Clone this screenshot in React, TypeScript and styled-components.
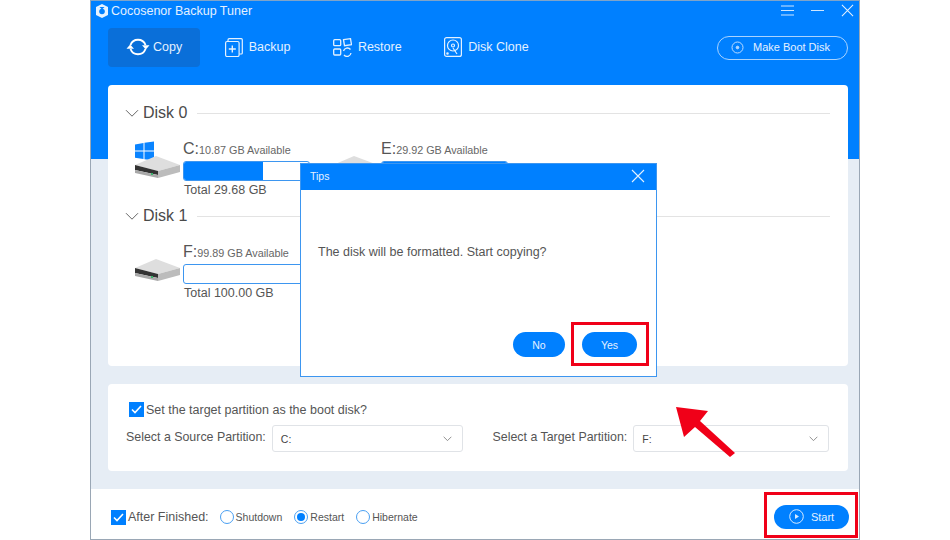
import styled, { createGlobalStyle } from "styled-components";

const BLUE = "#0080ff";
const RED = "#f00018";

const GlobalStyle = createGlobalStyle`
  html, body {
    margin: 0;
    padding: 0;
    background: #ffffff;
    font-family: "Liberation Sans", Arial, sans-serif;
  }
  * { box-sizing: border-box; }
`;

const Page = styled.div`
  position: relative;
  width: 950px;
  height: 540px;
  overflow: hidden;
  padding-left: 90px;
`;

const Window = styled.div`
  position: relative;
  width: 770px;
  height: 540px;
  display: flex;
  flex-direction: column;
  border: 1px solid #9aa7b5;
  border-top-color: #7fa4c9;
  background: linear-gradient(${BLUE} 158px, #e6edf5 158px);
`;

const TitleBar = styled.div`
  height: 19px;
  display: flex;
  align-items: center;
  padding: 0 5px;
  color: #e4f1ff;
  font-size: 12.5px;
`;

const TitleText = styled.span`
  margin-left: 3px;
`;

const WindowControls = styled.div`
  margin-left: auto;
  display: flex;
  align-items: center;
  gap: 17px;
`;

const TabBar = styled.div`
  height: 39px;
  margin-top: 8px;
  padding: 0 11px 0 17px;
  display: flex;
  align-items: center;
  gap: 6.5px;
`;

const Tab = styled.div<{ $active?: boolean }>`
  height: 39px;
  padding: 0 18px 1px;
  display: flex;
  align-items: center;
  gap: ${(p) => (p.$active ? "3px" : "6px")};
  border-radius: 4px;
  font-size: 12.5px;
  color: #e4f1ff;
  background: ${(p) => (p.$active ? "#0a6fd9" : "transparent")};
`;

const BootButton = styled.div`
  margin-left: auto;
  width: 131px;
  height: 24px;
  padding: 0 4px 1px 0;
  display: flex;
  align-items: center;
  justify-content: center;
  gap: 9px;
  border: 1px solid #a9d3ff;
  border-radius: 12px;
  font-size: 11px;
  color: #e4f1ff;
`;

const DiskCard = styled.div`
  height: 281px;
  margin: 18px 11px 0 17px;
  padding: 18px 18px 0 17px;
  background: #ffffff;
  border-radius: 4px;
`;

const DiskHeading = styled.div<{ $second?: boolean }>`
  height: 20px;
  margin-top: ${(p) => (p.$second ? "7px" : "0")};
  display: flex;
  align-items: center;
  gap: 4px;
  font-size: 16px;
  color: #4a4a4a;

  &::after {
    content: "";
    flex: 1;
    height: 1px;
    margin-left: 6px;
    background: #e3e3e3;
  }
`;

const DriveRow = styled.div`
  margin-top: 15px;
  padding-left: 9px;
  display: flex;
  gap: 22px;
`;

const Drive = styled.div`
  display: flex;
  gap: 3px;
`;

const DriveArt = styled.svg`
  flex: none;
  width: 46px;
  height: 40px;
  margin-top: 2px;
`;

const DriveInfo = styled.div`
  width: 127px;
`;

const DriveLabel = styled.div`
  height: 22px;
  display: flex;
  align-items: baseline;
  padding-top: 2px;
  font-size: 16px;
  color: #555555;
`;

const DriveFree = styled.span`
  font-size: 10.8px;
  color: #666666;
`;

const UsageBar = styled.div`
  height: 20px;
  margin-top: 1px;
  border: 1px solid #3d96f0;
  border-radius: 3px;
  overflow: hidden;
  background: #ffffff;
`;

const UsageFill = styled.div`
  height: 100%;
  background: ${BLUE};
`;

const DriveTotal = styled.div`
  height: 18px;
  padding: 1px 0 0 1px;
  line-height: 17px;
  font-size: 12.5px;
  color: #555555;
`;

const OptionsCard = styled.div`
  height: 87px;
  margin: 18px 11px 0 17px;
  padding: 17px 19px 0 18px;
  background: #ffffff;
  border-radius: 4px;
`;

const BootRow = styled.div`
  height: 17px;
  padding-left: 3px;
  display: flex;
  align-items: center;
  gap: 2px;
  font-size: 12.5px;
  color: #555555;
`;

const CheckBox = styled.span`
  flex: none;
  width: 15px;
  height: 15px;
  display: flex;
  align-items: center;
  justify-content: center;
  background: ${BLUE};
`;

const PartitionRow = styled.div`
  margin-top: 7px;
  display: flex;
  align-items: center;
  font-size: 12.4px;
  color: #555555;
`;

const PartitionLabel = styled.span<{ $gap?: number }>`
  margin-left: ${(p) => p.$gap ?? 0}px;
  margin-right: 6px;
  padding-bottom: 4px;
  white-space: nowrap;
`;

const Select = styled.div<{ $width: number }>`
  width: ${(p) => p.$width}px;
  height: 27px;
  padding: 0 10px 0 8px;
  display: flex;
  align-items: center;
  justify-content: space-between;
  border: 1px solid #e0e3e7;
  border-radius: 3px;
  font-size: 10.5px;
  color: #444444;
`;

const Footer = styled.div`
  flex: 1;
  margin-top: 18px;
  padding: 6px 10px 0 20px;
  display: flex;
  align-items: center;
  background: #ffffff;
`;

const FinishLabel = styled.span`
  margin: 0 11px 0 2px;
  font-size: 12.5px;
  color: #555555;
`;

const RadioOption = styled.label`
  margin-right: 12px;
  display: flex;
  align-items: center;
  gap: 2px;
  font-size: 10.5px;
  color: #555555;
`;

const RadioDot = styled.span<{ $on?: boolean }>`
  width: 14px;
  height: 14px;
  display: flex;
  align-items: center;
  justify-content: center;
  border: 1px solid #4a9ff2;
  border-radius: 50%;

  &::after {
    content: "";
    display: ${(p) => (p.$on ? "block" : "none")};
    width: 8px;
    height: 8px;
    border-radius: 50%;
    background: ${BLUE};
  }
`;

const StartButton = styled.div`
  margin-left: auto;
  width: 75px;
  height: 24px;
  padding-bottom: 1px;
  display: flex;
  align-items: center;
  justify-content: center;
  gap: 7px;
  border-radius: 12px;
  background: ${BLUE};
  font-size: 11px;
  color: #e4f1ff;
`;

const Dialog = styled.div`
  position: absolute;
  left: 209px;
  top: 162px;
  width: 357px;
  height: 214px;
  display: flex;
  flex-direction: column;
  border: 1px solid #3d96f0;
  background: #ffffff;
`;

const DialogHeader = styled.div`
  height: 26px;
  padding: 0 11px 3px 9px;
  display: flex;
  align-items: center;
  justify-content: space-between;
  background: ${BLUE};
  font-size: 10.5px;
  color: #e4f1ff;
`;

const DialogMessage = styled.div`
  padding: 54px 0 0 17px;
  line-height: 16px;
  font-size: 12.5px;
  color: #555555;
`;

const DialogActions = styled.div`
  margin-top: auto;
  padding: 0 19px 19px 0;
  display: flex;
  justify-content: flex-end;
  gap: 17px;
`;

const DialogButton = styled.div<{ $width: number }>`
  width: ${(p) => p.$width}px;
  height: 25px;
  display: flex;
  align-items: center;
  justify-content: center;
  border-radius: 13px;
  background: ${BLUE};
  font-size: 10.5px;
  color: #e4f1ff;
`;

const RedFrame = styled.div<{ $x: number; $y: number; $w: number; $h: number }>`
  position: absolute;
  left: ${(p) => p.$x}px;
  top: ${(p) => p.$y}px;
  width: ${(p) => p.$w}px;
  height: ${(p) => p.$h}px;
  border: 3px solid ${RED};
`;

const RedArrow = styled.svg`
  position: absolute;
  left: 670px;
  top: 400px;
  width: 70px;
  height: 62px;
`;

function Chevron({ size = 14, color = "#666" }: { size?: number; color?: string }) {
  return (
    <svg width={size} height={size * 0.6} viewBox="0 0 14 8" fill="none" stroke={color} strokeWidth="1">
      <path d="M1 1l6 6 6-6" />
    </svg>
  );
}

function Check() {
  return (
    <svg width="11" height="9" viewBox="0 0 11 9" fill="none" stroke="#fff" strokeWidth="1.6">
      <path d="M1 4.5l3 3L10 1" />
    </svg>
  );
}

function CloseIcon({ size, color }: { size: number; color: string }) {
  return (
    <svg width={size} height={size} viewBox="0 0 14 14" fill="none" stroke={color} strokeWidth="1.1">
      <path d="M1 1l12 12M13 1L1 13" />
    </svg>
  );
}

function DriveIcon({ windows }: { windows?: boolean }) {
  return (
    <DriveArt viewBox="0 0 46 40">
      {windows && (
        <g fill="#0a84ff">
          <path d="M1 4.500L9.500 3v7.500H1zM10.500 2.800L20 1.500v9h-9.500zM1 11.500h8.500V19L1 17.800zM10.500 11.500H20v9l-9.500-1.300z" />
        </g>
      )}
      <path d="M1 25l21-9 24 9-22 6z" fill="#dedede" />
      <path d="M1 25l23 6v4L1 30z" fill="#333333" />
      <path d="M1 30l23 5v3L1 33z" fill="#a8a8a8" />
      <path d="M24 31l22-6v7l-22 6z" fill="#bcbcbc" />
      <rect x="17" y="33" width="2" height="2" fill="#39b36b" />
    </DriveArt>
  );
}

export default function App() {
  return (
    <Page>
      <GlobalStyle />
      <Window>
        <TitleBar>
          <svg width="12" height="14" viewBox="0 0 12 14">
            <path d="M6 0l6 3v8l-6 3-6-3V3z" fill="#e4f1ff" />
            <circle cx="6" cy="7.500" r="2.800" fill={BLUE} />
            <path d="M3.500 3h5L6 5.500z" fill={BLUE} />
          </svg>
          <TitleText>Cocosenor Backup Tuner</TitleText>
          <WindowControls>
            <svg width="13" height="11" viewBox="0 0 13 11" stroke="#cfe6ff" strokeWidth="1">
              <path d="M0 1h13M0 5.500h13M0 10h13" />
            </svg>
            <svg width="13" height="3" viewBox="0 0 13 3" stroke="#cfe6ff" strokeWidth="1">
              <path d="M0 1.500h13" />
            </svg>
            <CloseIcon size={13} color="#e4f1ff" />
          </WindowControls>
        </TitleBar>

        <TabBar>
          <Tab $active>
            <svg width="24" height="20" viewBox="0 0 24 20" fill="none" stroke="#fff" strokeWidth="1.900">
              <path d="M4.500 8A8 8 0 0 1 19.500 8" />
              <path d="M19.500 12A8 8 0 0 1 4.500 12" />
              <path d="M16 8.200h7.500L19.800 12.500z" fill="#fff" stroke="none" />
              <path d="M0.500 11.800H8L4.200 7.500z" fill="#fff" stroke="none" />
            </svg>
            Copy
          </Tab>
          <Tab>
            <svg width="18" height="19" viewBox="0 0 18 19" fill="none" stroke="#e4f1ff" strokeWidth="1.200">
              <rect x="0.600" y="3.500" width="13.500" height="15" rx="1.500" />
              <path d="M3 3.500V2a1.300 1.300 0 0 1 1.300-1.300h12a1 1 0 0 1 1 1V15a1 1 0 0 1-1 1h-2" />
              <path d="M7.300 7.500v7M3.800 11h7" strokeWidth="1.400" />
            </svg>
            Backup
          </Tab>
          <Tab>
            <svg width="19" height="19" viewBox="0 0 19 19" fill="none" stroke="#e4f1ff" strokeWidth="1.300">
              <rect x="0.700" y="1.700" width="7" height="6" rx="1" />
              <rect x="0.700" y="11" width="7" height="6" rx="1" />
              <path d="M10.500 1.700l7-1 1 6-7 1z" />
              <path d="M10.500 13a4 4 0 0 1 7-1.500M18 15a4 4 0 0 1-7 2" />
            </svg>
            Restore
          </Tab>
          <Tab>
            <svg width="18" height="20" viewBox="0 0 18 20" fill="none" stroke="#e4f1ff" strokeWidth="1.200">
              <rect x="0.600" y="0.600" width="16.800" height="18.800" rx="2" />
              <circle cx="9" cy="8.500" r="5.500" />
              <circle cx="9" cy="8.500" r="1.500" />
              <path d="M9 11l4 6" />
              <circle cx="3.500" cy="16.500" r="0.700" />
            </svg>
            Disk Clone
          </Tab>
          <BootButton>
            <svg width="13" height="13" viewBox="0 0 13 13" fill="none" stroke="#bcdcff">
              <circle cx="6.500" cy="6.500" r="5.500" />
              <circle cx="6.500" cy="6.500" r="1.300" fill="#bcdcff" />
            </svg>
            Make Boot Disk
          </BootButton>
        </TabBar>

        <DiskCard>
          <DiskHeading>
            <Chevron />
            Disk 0
          </DiskHeading>
          <DriveRow>
            <Drive>
              <DriveIcon windows />
              <DriveInfo>
                <DriveLabel>
                  C:<DriveFree>10.87 GB Available</DriveFree>
                </DriveLabel>
                <UsageBar>
                  <UsageFill style={{ width: "63%" }} />
                </UsageBar>
                <DriveTotal>Total 29.68 GB</DriveTotal>
              </DriveInfo>
            </Drive>
            <Drive>
              <DriveIcon />
              <DriveInfo>
                <DriveLabel>
                  E:<DriveFree>29.92 GB Available</DriveFree>
                </DriveLabel>
                <UsageBar>
                  <UsageFill style={{ width: "100%" }} />
                </UsageBar>
                <DriveTotal>Total 30.00 GB</DriveTotal>
              </DriveInfo>
            </Drive>
          </DriveRow>
          <DiskHeading $second>
            <Chevron />
            Disk 1
          </DiskHeading>
          <DriveRow>
            <Drive>
              <DriveIcon />
              <DriveInfo>
                <DriveLabel>
                  F:<DriveFree>99.89 GB Available</DriveFree>
                </DriveLabel>
                <UsageBar />
                <DriveTotal>Total 100.00 GB</DriveTotal>
              </DriveInfo>
            </Drive>
          </DriveRow>
        </DiskCard>

        <OptionsCard>
          <BootRow>
            <CheckBox>
              <Check />
            </CheckBox>
            Set the target partition as the boot disk?
          </BootRow>
          <PartitionRow>
            <PartitionLabel>Select a Source Partition:</PartitionLabel>
            <Select $width={191}>
              C:
              <Chevron size={9} color="#555" />
            </Select>
            <PartitionLabel $gap={30}>Select a Target Partition:</PartitionLabel>
            <Select $width={196}>
              F:
              <Chevron size={9} color="#555" />
            </Select>
          </PartitionRow>
        </OptionsCard>

        <Footer>
          <CheckBox>
            <Check />
          </CheckBox>
          <FinishLabel>After Finished:</FinishLabel>
          <RadioOption>
            <RadioDot />
            Shutdown
          </RadioOption>
          <RadioOption>
            <RadioDot $on />
            Restart
          </RadioOption>
          <RadioOption>
            <RadioDot />
            Hibernate
          </RadioOption>
          <StartButton>
            <svg width="15" height="15" viewBox="0 0 15 15" fill="none" stroke="#d6eaff">
              <circle cx="7.500" cy="7.500" r="6.800" />
              <path d="M6 5l4 2.500L6 10z" fill="#d6eaff" stroke="none" />
            </svg>
            Start
          </StartButton>
        </Footer>

        <Dialog>
          <DialogHeader>
            Tips
            <CloseIcon size={14} color="#e4f1ff" />
          </DialogHeader>
          <DialogMessage>The disk will be formatted. Start copying?</DialogMessage>
          <DialogActions>
            <DialogButton $width={52}>No</DialogButton>
            <DialogButton $width={55}>Yes</DialogButton>
          </DialogActions>
        </Dialog>
      </Window>

      <RedFrame $x={571} $y={322} $w={78} $h={44} />
      <RedFrame $x={764} $y={492} $w={94} $h={46} />
      <RedArrow viewBox="0 0 70 62">
        <path d="M6 7L38 11 30 21 65 53 60 57 25 27 14 37z" fill={RED} />
      </RedArrow>
    </Page>
  );
}
